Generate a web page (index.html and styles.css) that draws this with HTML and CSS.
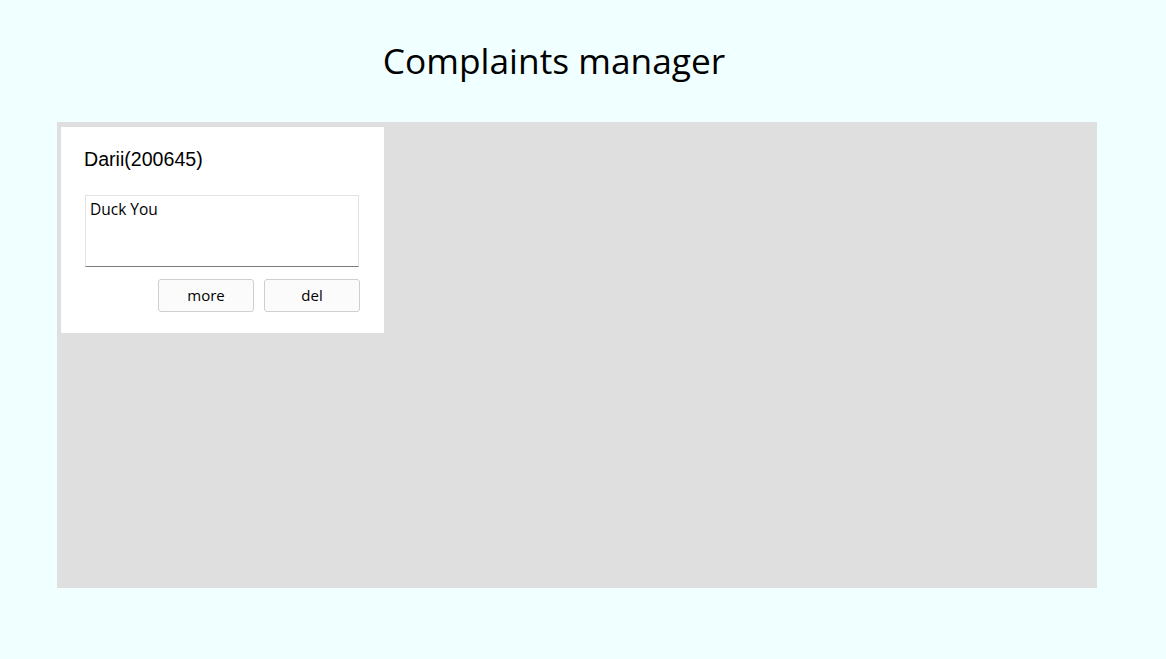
FILE: index.html
```html
<!DOCTYPE html>
<html>
<head>
<meta charset="utf-8">
<link rel="stylesheet" href="styles.css">
</head>
<body>
<h1 class="title">Complaints manager</h1>
<div class="board">
  <div class="card">
    <div class="card-name">Darii(200645)</div>
    <textarea class="card-text">Duck You</textarea>
    <div class="card-actions">
      <button class="btn">more</button>
      <button class="btn">del</button>
    </div>
  </div>
</div>
</body>
</html>
```
FILE: styles.css
```css
html, body {
  margin: 0;
  padding: 0;
  background: #f0ffff;
}
body {
  font-family: "Open Sans", "Noto Sans", sans-serif;
  height: 659px;
  overflow: hidden;
}
.title {
  margin: 0;
  padding: 36px 58px 0 0;
  height: 86px;
  box-sizing: border-box;
  text-align: center;
  font-weight: 400;
  font-size: 35.3px;
  line-height: 48px;
  color: #000;
}
.board {
  margin: 36px 0 0 57px;
  width: 1040px;
  height: 466px;
  box-sizing: border-box;
  padding: 5px 4px;
  background: #dfdfdf;
  display: flex;
  align-items: flex-start;
}
.card {
  width: 323px;
  height: 206px;
  box-sizing: border-box;
  background: #fff;
  padding: 20px 24px 0 24px;
  display: flex;
  flex-direction: column;
}
.card-name {
  font-family: "Liberation Sans", Arial, sans-serif;
  font-size: 19.6px;
  line-height: 24px;
  color: #000;
  margin-left: -1px;
}
.card-text {
  margin-top: 24px;
  width: 274px;
  height: 72px;
  box-sizing: border-box;
  border: 1px solid #e3e3e3;
  border-bottom: 1px solid #7a7a7a;
  padding: 4px 4px;
  font-family: "Open Sans", "Noto Sans", sans-serif;
  font-size: 15.5px;
  line-height: 19px;
  color: #000;
  resize: none;
  outline: none;
  background: #fff;
}
.card-actions {
  margin-top: 12px;
  width: 275px;
  display: flex;
  justify-content: flex-end;
  gap: 10px;
}
.btn {
  width: 96px;
  height: 33px;
  box-sizing: border-box;
  border: 1px solid #cfcfcf;
  border-radius: 3px;
  background: #fbfbfb;
  font-family: "Open Sans", "Noto Sans", sans-serif;
  font-size: 15px;
  line-height: 20px;
  color: #000;
  padding: 0 0 2px 0;
}
```
